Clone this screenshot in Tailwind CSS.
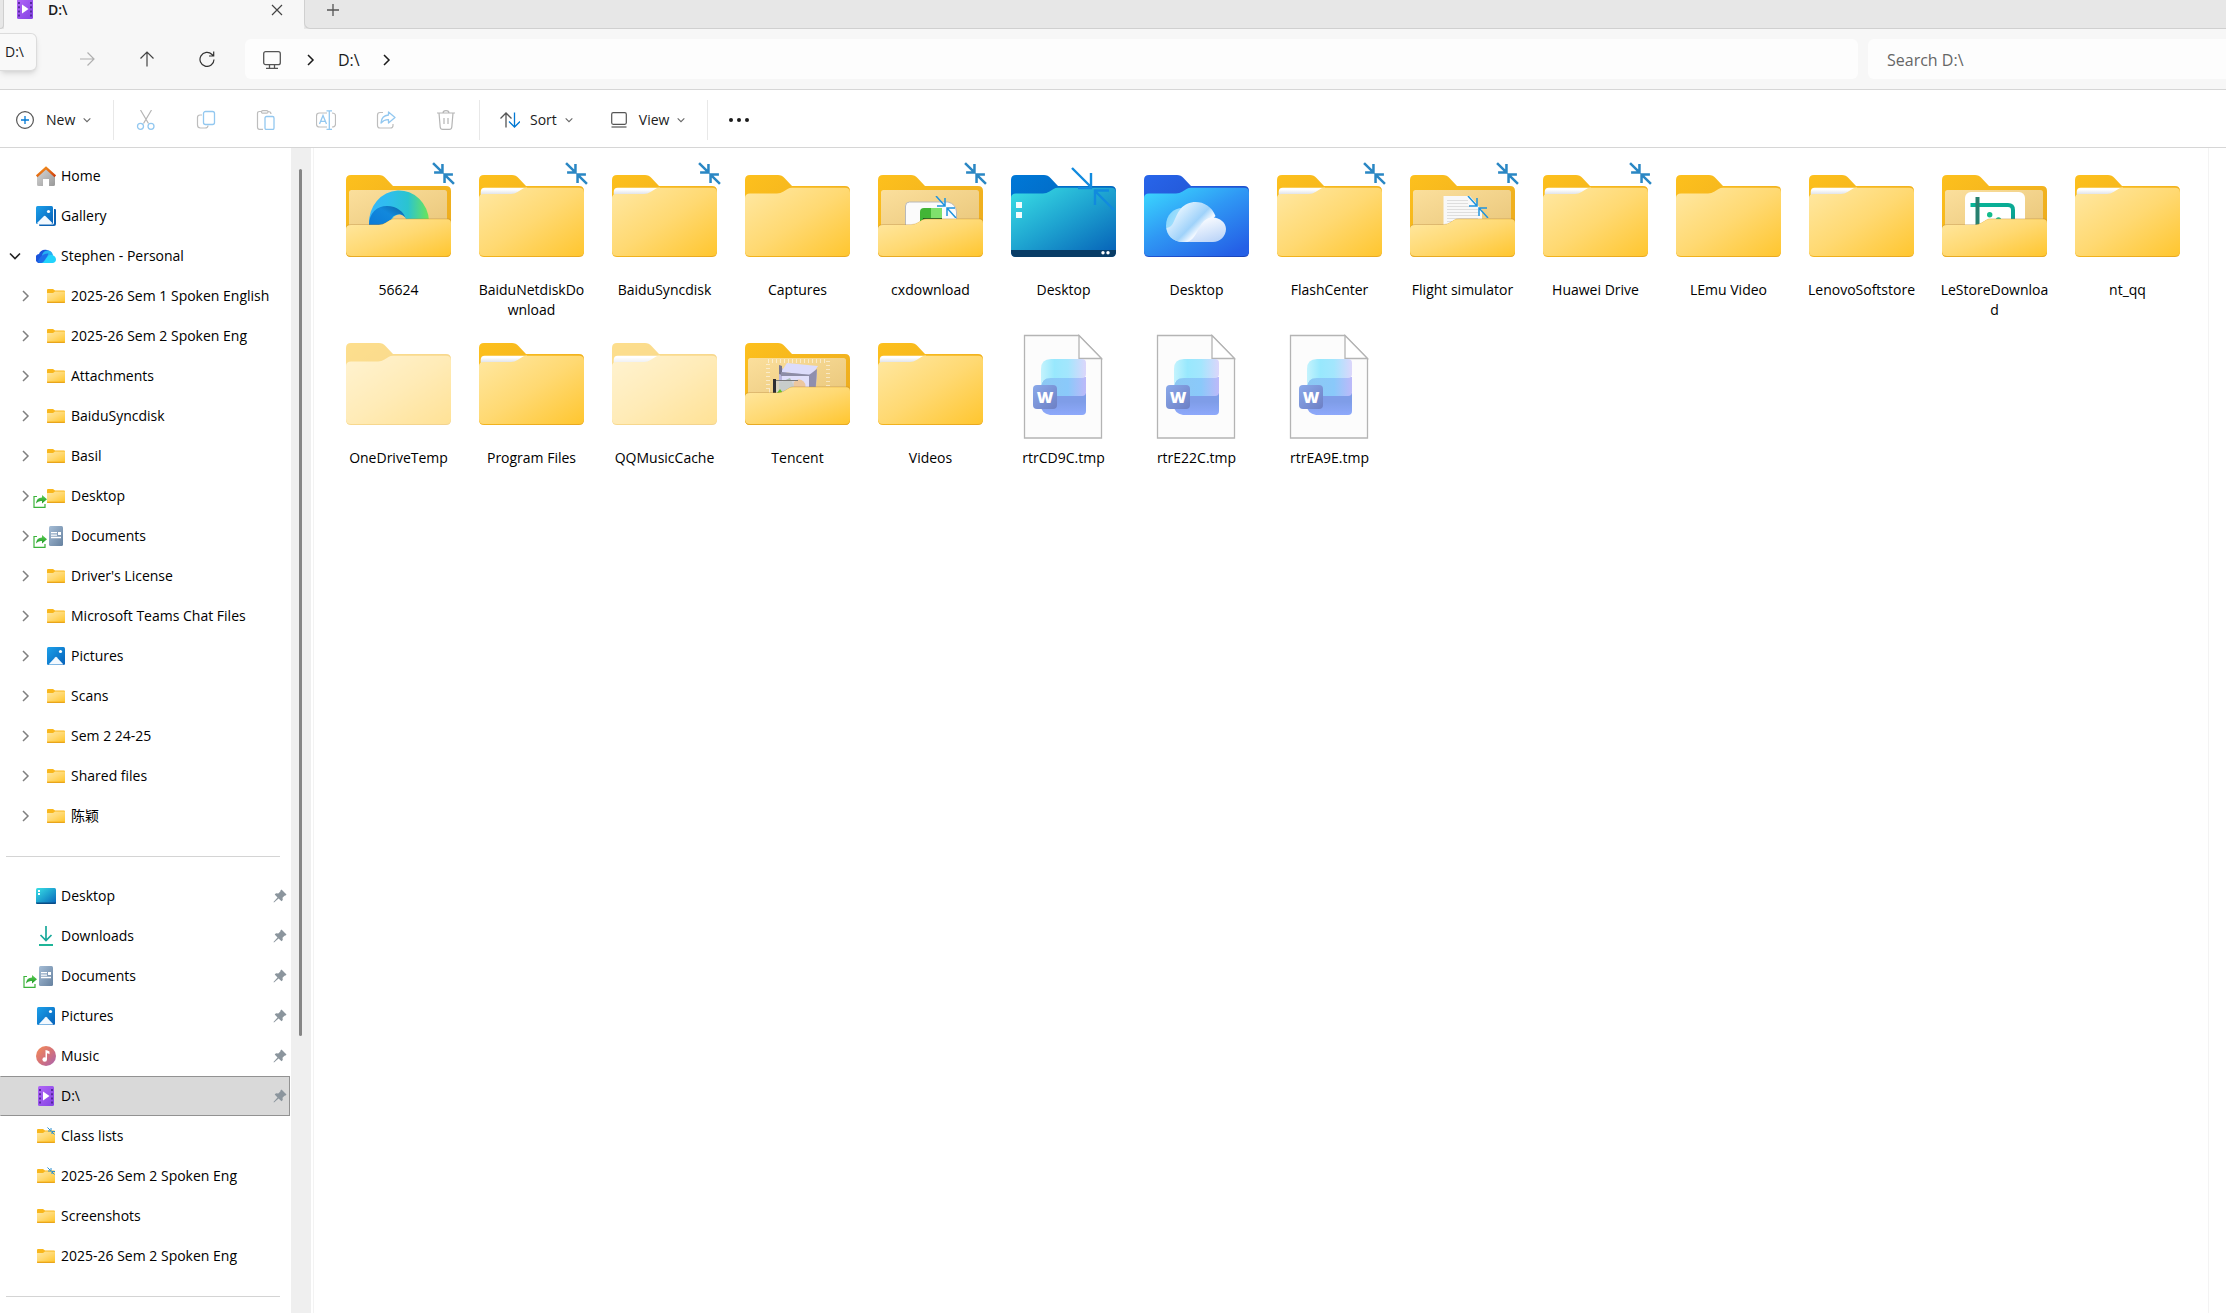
<!DOCTYPE html>
<html lang="en">
<head>
  <meta charset="UTF-8">
  <meta name="viewport" content="width=device-width, initial-scale=1.0">
  <title>D:\</title>
  <script src="https://cdn.jsdelivr.net/npm/@tailwindcss/browser@4"></script>
</head>
<body class="flex h-screen flex-col overflow-hidden bg-white font-['Open_Sans','Noto_Sans_CJK_SC',sans-serif] text-[14px] leading-5 text-black">

  <!-- Shared gradients and icon symbols -->
  <svg class="absolute size-0" aria-hidden="true">
    <defs>
      <linearGradient id="g-back" x1="0" y1="0" x2="1" y2="1"><stop offset="0" stop-color="#fdc01d"/><stop offset="1" stop-color="#e9a820"/></linearGradient>
      <linearGradient id="g-front" x1="0" y1="0" x2="1" y2="1"><stop offset="0" stop-color="#ffe8a3"/><stop offset=".5" stop-color="#ffd972"/><stop offset="1" stop-color="#ffc62f"/></linearGradient>
      <linearGradient id="g-inner" x1="0" y1="0" x2="1" y2="1"><stop offset="0" stop-color="#fbdf9c"/><stop offset="1" stop-color="#e9c67a"/></linearGradient>
      <linearGradient id="g-paper" x1="0" y1="0" x2="0" y2="1"><stop offset=".2" stop-color="#ffffff"/><stop offset=".8" stop-color="#dadde3"/></linearGradient>
      <linearGradient id="g-desk" x1="0" y1="0" x2="1" y2="1"><stop offset="0" stop-color="#3ae0e5"/><stop offset=".5" stop-color="#1ea3d0"/><stop offset="1" stop-color="#0662b8"/></linearGradient>
      <linearGradient id="g-deskback" x1="0" y1="0" x2="1" y2="1"><stop offset="0" stop-color="#0078d7"/><stop offset="1" stop-color="#0459ad"/></linearGradient>
      <linearGradient id="g-od" x1="0" y1="0" x2=".8" y2="1"><stop offset="0" stop-color="#3cdcff"/><stop offset=".5" stop-color="#2f97f4"/><stop offset="1" stop-color="#2560e6"/></linearGradient>
      <linearGradient id="g-odback" x1="0" y1="0" x2="1" y2="1"><stop offset="0" stop-color="#2865ea"/><stop offset="1" stop-color="#1a43b8"/></linearGradient>
      <linearGradient id="g-cloud1" x1="0" y1="0" x2="1" y2="1"><stop offset="0" stop-color="#7cd2fb"/><stop offset="1" stop-color="#c7ecff"/></linearGradient>
      <linearGradient id="g-cloud2" x1="0" y1="0" x2="1" y2=".8"><stop offset=".2" stop-color="#e9f6ff"/><stop offset=".6" stop-color="#9fd2fa"/><stop offset=".75" stop-color="#f2f8ff"/></linearGradient>
      <linearGradient id="g-cloud3" x1=".3" y1="0" x2=".8" y2="1"><stop offset="0" stop-color="#ffffff"/><stop offset="1" stop-color="#b9d3f8"/></linearGradient>
      <linearGradient id="g-edge" x1="0" y1="0" x2="1" y2="0"><stop offset="0" stop-color="#35b6f8"/><stop offset=".3" stop-color="#2fbdf0"/><stop offset=".65" stop-color="#2bc4cf"/><stop offset="1" stop-color="#6ce557"/></linearGradient>
      <linearGradient id="g-edge2" x1="0" y1="1" x2="1" y2="0"><stop offset="0" stop-color="#0a78d6"/><stop offset=".6" stop-color="#1288dc"/><stop offset="1" stop-color="#0b5f9e"/></linearGradient>
      <linearGradient id="g-w1" x1="0" y1="0" x2="1" y2="0"><stop offset="0" stop-color="#c4f3fd"/><stop offset=".3" stop-color="#98e8fd"/><stop offset=".6" stop-color="#a3e6fd"/><stop offset="1" stop-color="#dcd6fb"/></linearGradient>
      <linearGradient id="g-w2" x1="0" y1="0" x2="1" y2="0"><stop offset="0" stop-color="#8cc8f3"/><stop offset=".6" stop-color="#8ac9fa"/><stop offset="1" stop-color="#bdb9f9"/></linearGradient>
      <linearGradient id="g-w3" x1="0" y1="0" x2="0" y2="1"><stop offset=".4" stop-color="#7f9de8"/><stop offset="1" stop-color="#8ea9fb"/></linearGradient>
      <linearGradient id="g-w4" x1="0" y1="0" x2="1" y2="1"><stop offset="0" stop-color="#8aa9ea"/><stop offset="1" stop-color="#6d7fc4"/></linearGradient>
      <linearGradient id="g-pic" x1="0" y1="0" x2="1" y2="1"><stop offset="0" stop-color="#1ca0ea"/><stop offset="1" stop-color="#0661b9"/></linearGradient>
      <linearGradient id="g-music" x1="0" y1="0" x2="1" y2="1"><stop offset="0" stop-color="#f58d57"/><stop offset=".5" stop-color="#d57277"/><stop offset="1" stop-color="#a763b3"/></linearGradient>
      <linearGradient id="g-video" x1="0" y1="0" x2="1" y2="1"><stop offset="0" stop-color="#b267f7"/><stop offset="1" stop-color="#8342e3"/></linearGradient>
      <linearGradient id="g-docs" x1="0" y1="0" x2="1" y2="1"><stop offset="0" stop-color="#a5bdd6"/><stop offset="1" stop-color="#66819f"/></linearGradient>
      <linearGradient id="g-roof" x1="0" y1="0" x2="1" y2="1"><stop offset="0" stop-color="#f79a1f"/><stop offset="1" stop-color="#cf3d0c"/></linearGradient>
      <linearGradient id="g-wall" x1="0" y1="0" x2="1" y2="1"><stop offset="0" stop-color="#dadada"/><stop offset="1" stop-color="#989898"/></linearGradient>
      <linearGradient id="g-share" x1="0" y1="0" x2="0" y2="1"><stop offset="0" stop-color="#5ccf57"/><stop offset="1" stop-color="#1f9a24"/></linearGradient>
      <linearGradient id="g-teal" x1="0" y1="0" x2="1" y2="1"><stop offset="0" stop-color="#08b598"/><stop offset=".7" stop-color="#0aa593"/><stop offset="1" stop-color="#176f93"/></linearGradient>
    </defs>

    <!-- Large icons, drawn on a 133x124 tile -->
    <symbol id="shrink" viewBox="0 0 22 22">
      <path d="M1 1l9 9M10 2v8H2M21 21l-9-9M12 20v-8h8" fill="none" stroke="#2a87c4" stroke-width="2.400"/>
    </symbol>
    <symbol id="shrink-thin" viewBox="0 0 22 22">
      <path d="M1 0l9 10M10 2v8H2M21 22l-9-10M12 20v-8h8" fill="none" stroke="#1f93dd" stroke-width="1.500"/>
    </symbol>
    <symbol id="folder" viewBox="0 0 133 124">
      <path d="M14 98V25q0-5 5-5h28q4 0 6.500 3l7.500 8h53q5 0 5 5v61q0 5-5 5H19q-5 0-5-5z" fill="url(#g-back)"/>
      <path d="M14 43q0-4.500 5-4.500h27q3.500 0 6.500-2l4-2.500q2-1.300 4.500-1.300h53q5 0 5 5V96q0 5-5 5H19q-5 0-5-5z" fill="url(#g-front)"/>
    </symbol>
    <symbol id="folder-full" viewBox="0 0 133 124">
      <path d="M14 98V25q0-5 5-5h28q4 0 6.500 3l7.500 8h53q5 0 5 5v61q0 5-5 5H19q-5 0-5-5z" fill="url(#g-back)"/>
      <path d="M15.700 42v-5q0-4.300 4-4.300H62v8z" fill="url(#g-paper)"/>
      <path d="M14 43q0-4 5-4h27q3.500 0 6.500-2l4-2.500q2-1.800 4.500-1.800h53q5 0 5 5V96q0 5-5 5H19q-5 0-5-5z" fill="url(#g-front)"/>
    </symbol>
    <symbol id="open-back" viewBox="0 0 133 124">
      <path d="M14 98V25q0-5 5-5h28q4 0 6.500 3l7.500 8h53q5 0 5 5v61q0 5-5 5H19q-5 0-5-5z" fill="url(#g-back)"/>
      <path d="M17 75V37.500q0-2.500 2.500-2.500h93q2.500 0 2.500 2.500V75z" fill="url(#g-inner)"/>
    </symbol>
    <symbol id="open-front" viewBox="0 0 133 124">
      <path d="M14 73q0-4 5-4h29q3.500 0 6.500-2l4-2.500q2-1.300 4.500-1.300h53q3 0 3 3V96H14z" fill="#b98a3c" opacity=".35"/>
      <path d="M14 74q0-4 5-4h28q3.500 0 6.500-2l4-2.500q2-1.300 4.500-1.300h53q4 0 4 4V97q0 5-5 5H19q-5 0-5-5z" fill="#e8ab25"/>
      <path d="M14 74q0-4 5-4h28q3.500 0 6.500-2l4-2.500q2-1.300 4.500-1.300h53q4 0 4 4V96q0 5-5 5H19q-5 0-5-5z" fill="url(#g-front)"/>
    </symbol>
    <symbol id="in-edge" viewBox="0 0 133 124">
      <path d="M37 69a30 32 0 0 1 60-3q0 6-5 9H37z" fill="url(#g-edge)"/>
      <path d="M37 70c0-12 8-19 18-19s17 6 19 13q-3-5-8-4.500-5 .5-7 5-2 6-8 10H37z" fill="url(#g-edge2)"/>
      <path d="M59 66q3-7 9-6.500 4 .5 6 4.500v6H58z" fill="#efcd8a"/>
    </symbol>
    <symbol id="in-game" viewBox="0 0 133 124">
      <path d="M41.500 76V51q0-4 4-4H84q8 2 8.500 10v19z" fill="#fbfbfb" stroke="#b9b9b9"/>
      <path d="M56 76V57q0-4 4-4h18v23z" fill="#42b536"/>
      <path d="M67 53h11v10H67z" fill="#7fe06c"/>
      <path d="M59 63h19v8H58z" fill="#0f5f21"/>
    </symbol>
    <symbol id="in-page" viewBox="0 0 133 124">
      <path d="M47.500 76V41H74l12 14v21z" fill="#f8f8f8"/>
      <path d="M51 45.500h21M51 48.500h21M51 51.500h23M51 54.500h31M51 57.500h31M51 60.500h31M51 63.500h31M51 66.500h20" stroke="#dedede"/>
    </symbol>
    <symbol id="in-crop" viewBox="0 0 133 124">
      <rect x="37" y="37" width="60" height="50" rx="6" fill="#fff"/>
      <path d="M42.500 50H80q5 0 5 5v20" fill="none" stroke="url(#g-teal)" stroke-width="4"/>
      <path d="M49.500 42v34" stroke="#27806f" stroke-width="4"/>
      <circle cx="61.700" cy="59.700" r="2.700" fill="#12bb8c"/><circle cx="70.500" cy="65" r="2.700" fill="#12bb8c"/>
    </symbol>
    <symbol id="in-box" viewBox="0 0 133 124">
      <rect x="37" y="38" width="60" height="30" fill="none" stroke="#fff" stroke-opacity=".5" stroke-width="4" stroke-dasharray="1 3"/>
      <path d="M48 42l8 8h30l-2 26H48z" fill="#b9b6de"/>
      <path d="M56 40l31 3-6 9-31-3z" fill="#dcdcfb"/>
      <path d="M48 42l3 1v9l-3-1z" fill="#77778f"/>
      <path d="M50 49l31 3v3l-31-2z" fill="#8d8da6"/>
      <path d="M51 53h27v20H51z" fill="#e0dffb"/>
      <path d="M78 52l8-6-2 28h-6z" fill="#8f8fae"/>
      <circle cx="68" cy="63" r="6.500" fill="#ecc79e"/>
      <path d="M48 60l11-5 4 8-6 9h-9z" fill="#a9bdb3"/>
      <path d="M42 56h3v14h-3z" fill="#2d2d33"/>
      <path d="M45 58h18v12H45z" fill="#d2d2d2" opacity=".75"/><path d="M45 57.500h22" stroke="#777"/>
      <path d="M46 70l3-4 3 4z" fill="#62c423"/>
    </symbol>
    <symbol id="desk-folder" viewBox="0 0 133 124">
      <path d="M14 98V25q0-5 5-5h28q4 0 6.500 3l7.500 8h53q5 0 5 5v61q0 5-5 5H19q-5 0-5-5z" fill="url(#g-deskback)"/>
      <path d="M14 43q0-4.500 5-4.500h27q3.500 0 6.500-2l4-2.500q2-1.300 4.500-1.300h53q5 0 5 5V97H14z" fill="url(#g-desk)"/>
      <path d="M14 95h105v2q0 5-5 5H19q-5 0-5-5z" fill="#093c66"/>
      <path d="M19 47h6v6h-6zM19 57h6v6h-6z" fill="#f4fdfd"/>
      <circle cx="106" cy="97.700" r="1.700" fill="#fff"/><circle cx="111" cy="97.700" r="1.700" fill="#fff"/>
      <path d="M75 13l19 19M94 18v15H81M117 55L98 36M98 50V35.500h14" fill="none" stroke="#118ade" stroke-width="2.400"/>
    </symbol>
    <symbol id="od-folder" viewBox="0 0 133 124">
      <path d="M14 98V25q0-5 5-5h28q4 0 6.500 3l7.500 8h53q5 0 5 5v61q0 5-5 5H19q-5 0-5-5z" fill="url(#g-odback)"/>
      <path d="M14 43q0-4.500 5-4.500h27q3.500 0 6.500-2l4-2.500q2-1.300 4.500-1.300h53q5 0 5 5V96q0 5-5 5H19q-5 0-5-5z" fill="url(#g-od)"/>
      <path d="M36 71c0-11 7-18 17-18v34C43 87 36 80 36 71z" fill="url(#g-cloud1)"/>
      <path d="M36.500 73c8-1 7-10 14-19 9-11 29-9 35 7L62 87h-9c-9 0-15.500-6-16.500-14z" fill="url(#g-cloud2)"/>
      <path d="M57 87c9-2 10-14 17-21 9-8 22-1 22 8 0 7-6 13-13 13z" fill="url(#g-cloud3)"/>
    </symbol>
    <symbol id="word-doc" viewBox="0 0 133 124">
      <path d="M27.500 12.500h54.500l22.500 23v79.500h-77z" fill="#fcfcfc" stroke="#b4b4b4" stroke-width="1.300"/>
      <path d="M82 12.500v23h22.500z" fill="#fff" stroke="#b4b4b4" stroke-width="1.300"/>
      <path d="M44 70h45v18q0 4-4 4H53q-9-2-9-9z" fill="url(#g-w3)"/>
      <path d="M44 65q0-10 9-11h36v15q0 4-4 4H44z" fill="url(#g-w2)"/>
      <path d="M44 46q0-10 10-10h31q4 0 4 4v11q0 4-4 4H54q-10 0-10 9z" fill="url(#g-w1)"/>
      <rect x="36" y="62" width="24" height="24" rx="4" fill="url(#g-w4)"/>
      <text x="48" y="80" text-anchor="middle" font-family="Open Sans, sans-serif" font-weight="800" font-size="16" fill="#fff">W</text>
    </symbol>

    <!-- Small navigation icons -->
    <symbol id="s-folder" viewBox="0 0 20 20">
      <path d="M1 4q0-1 1-1h5l2 1.500h9q1 0 1 1V16q0 1-1 1H2q-1 0-1-1z" fill="#f9b71c"/>
      <path d="M1 7h6l2-1.500h10V15.500H1z" fill="url(#g-front)"/>
      <path d="M1 16h18q0 1-1 1H2q-1 0-1-1z" fill="#e8a41c"/>
    </symbol>
    <symbol id="s-folder-shrink" viewBox="0 0 20 20">
      <use href="#s-folder" width="20" height="20"/>
      <path d="M11.500 1.500l3 3M15 2v3h-3M18.500 8.500l-3-3M16 8V5.500h3" fill="none" stroke="#2a8fd0"/>
    </symbol>
    <symbol id="s-home" viewBox="0 0 20 20">
      <path d="M1 10l9-8 9 8v8.500q0 1.500-1.500 1.500H13v-7H7v7H2.500Q1 20 1 18.500z" fill="url(#g-wall)"/>
      <path d="M.700 10.300L10 1.800l9.300 8.500" fill="none" stroke="url(#g-roof)" stroke-width="2.400"/>
    </symbol>
    <symbol id="s-gallery" viewBox="0 0 20 20">
      <path d="M3 3h16q1 0 1 1v14q0 2-2 2H4q-1 0-1-1z" fill="#0b62b4"/>
      <rect width="18" height="18.500" rx="1.500" fill="#fff"/>
      <rect width="17" height="18" rx="1.500" fill="url(#g-pic)"/>
      <path d="M1 17l7-7q.700-.700 1.400 0l7 7q-.700 1-1.400 1H2z" fill="#f2f9ff"/>
      <circle cx="12.500" cy="5.500" r="1.600" fill="#fff"/>
    </symbol>
    <symbol id="s-cloud" viewBox="0 0 20 20">
      <path d="M4.500 17A4.500 4.500 0 0 1 3 8c1-3 4-5 8-4 3 .5 5 2.500 5.500 5L9 17z" fill="#1b55dc"/>
      <path d="M6 9c2-6 10-6 11 .5L9 17H5z" fill="#25b1f3"/>
      <path d="M5.500 17c3 0 3.500-4 6-6.500 3-3 8.500-1 8.500 3 0 2-1.500 3.500-3.500 3.500z" fill="#22d3fc"/>
      <path d="M5 17c3-.500 4-4 6-6l1.500-3.500C8 7 4 10 1.500 16q1.500 1 3.500 1z" fill="#1d6fea"/>
    </symbol>
    <symbol id="s-pictures" viewBox="0 0 20 20">
      <rect x="1" y="1" width="18" height="18" rx="1.500" fill="url(#g-pic)"/>
      <path d="M2.500 18.500l6.800-7.300q.700-.700 1.400 0l6.800 7.300z" fill="#f2f9ff"/>
      <circle cx="14.500" cy="5.500" r="1.600" fill="#fff"/>
    </symbol>
    <symbol id="s-docs" viewBox="0 0 20 20">
      <rect x="3" width="14" height="20" rx="1.500" fill="url(#g-docs)"/>
      <path d="M5 6.700h6M5 9.200h6M5 11.500h10" stroke="#fff" stroke-width="1.300"/><path d="M12 6h3v3h-3z" fill="#fff"/>
    </symbol>
    <symbol id="s-desktop" viewBox="0 0 20 20">
      <rect y="2" width="20" height="16" rx="1.500" fill="url(#g-desk)"/>
      <path d="M0 16.500h20q0 1.500-1.500 1.500h-17Q0 18 0 16.500z" fill="#0a4c85"/>
      <path d="M2 4h2v2H2zM2 7h2v2H2z" fill="#fff"/>
    </symbol>
    <symbol id="s-downloads" viewBox="0 0 20 20">
      <path d="M10 0v14M4.500 9l5.500 5.500L15.500 9" fill="none" stroke="#1aa99b" stroke-width="1.700"/>
      <path d="M3 18h14v2H3z" fill="#1eb598"/>
    </symbol>
    <symbol id="s-music" viewBox="0 0 20 20">
      <circle cx="10" cy="10" r="10" fill="url(#g-music)"/>
      <circle cx="8.700" cy="13.500" r="2.300" fill="#fff"/><path d="M9.500 4q2 .200 4 1.500v2.700Q12 7.200 11 7.200v6.300H9.500z" fill="#fff"/>
    </symbol>
    <symbol id="s-video" viewBox="0 0 20 20">
      <rect x="2" width="16" height="20" rx="1.500" fill="url(#g-video)"/>
      <path d="M4 3v15M16 3v15" stroke="#4b2391" stroke-width="1.700" stroke-dasharray="2 2.200"/>
      <path d="M7 5.500l6.500 4.500L7 14.500z" fill="#fff"/>
    </symbol>
    <symbol id="s-share" viewBox="0 0 14 14">
      <path d="M4 2.500H1v10.800h11V10" fill="none" stroke="#3bb33a" stroke-width="1.200"/>
      <path d="M3 9.500q.500-6 6-6V1l5 4.300-5 4.200V7q-4-.500-6 2.500z" fill="url(#g-share)"/>
    </symbol>
    <symbol id="s-pin" viewBox="0 0 14 14">
      <path d="M8.500.500l5 5-1 1-1 .200-2 2 .300 2.300-1.300 1.300L5.600 9.500 1 13.500l-.500-.500L4.500 8.400 1.700 5.500 3 4.200l2.300.300 2-2 .200-1z" fill="#8b959d"/>
    </symbol>
    <symbol id="chev-r" viewBox="0 0 10 12"><path d="M2 1l5 5-5 5" fill="none" stroke="currentColor" stroke-width="1.500"/></symbol>
    <symbol id="chev-d" viewBox="0 0 12 10"><path d="M1 2.500l5 5 5-5" fill="none" stroke="currentColor" stroke-width="1.600"/></symbol>
  </svg>

  <!-- Tab strip -->
  <header class="flex h-[29px] shrink-0 bg-[#e7e7e7] text-[#1b1b1b]">
    <div class="w-1 rounded-br-md border-r border-b border-[#cfcfcf]"></div>
    <div class="flex h-[29px] w-[300px] items-start bg-[#f7f7f7] pl-[11px]">
      <svg class="-mt-px size-5"><use href="#s-video"/></svg>
      <span class="ml-[13px] font-semibold">D:\</span>
      <button class="ml-auto flex h-[19px] w-[54px] items-center justify-center" aria-label="Close tab">
        <svg class="size-3" viewBox="0 0 12 12"><path d="M1 1l10 10M11 1L1 11" stroke="#444" stroke-width="1.200"/></svg>
      </button>
    </div>
    <div class="flex flex-1 items-start rounded-bl-md border-b border-l border-[#d0d0d0] pl-[22px]">
      <button class="h-5" aria-label="New tab"><svg class="size-3" viewBox="0 0 12 12"><path d="M6 0v12M0 6h12" stroke="#555" stroke-width="1.300"/></svg></button>
    </div>
  </header>

  <!-- Navigation bar -->
  <nav class="relative flex h-[61px] shrink-0 items-center border-b border-[#d6d6d6] bg-[#f7f7f7] pl-[57px] text-[#1b1b1b]">
    <button class="flex w-[60px] justify-center" aria-label="Forward"><svg class="size-4" viewBox="0 0 16 16"><path d="M1 8h14M8.500 1.500L15 8l-6.500 6.500" fill="none" stroke="#b0b0b0" stroke-width="1.200"/></svg></button>
    <button class="flex w-[60px] justify-center" aria-label="Up"><svg class="size-4" viewBox="0 0 16 16"><path d="M8 15.500V1M1.500 7.500L8 1l6.500 6.500" fill="none" stroke="#444" stroke-width="1.200"/></svg></button>
    <button class="flex w-[60px] justify-center" aria-label="Refresh"><svg class="size-4" viewBox="0 0 16 16"><path d="M15 8.500A7 7 0 1 1 13 3.500l1.500 1.500M14.700.500V5H10" fill="none" stroke="#333" stroke-width="1.200"/></svg></button>
    <div class="ml-2 flex h-10 flex-1 items-center rounded-md bg-[#fdfdfd] pt-px pl-[18px] text-[16px]">
      <button aria-label="This PC"><svg class="size-[18px]" viewBox="0 0 18 18"><rect x=".7" y=".7" width="16.600" height="13" rx="2" fill="none" stroke="#555" stroke-width="1.300"/><path d="M3 17.300h12M6.500 14v3M11.500 14v3" stroke="#555" stroke-width="1.300"/></svg></button>
      <svg class="ml-[25px] h-3 w-[10px]"><use href="#chev-r"/></svg>
      <button class="ml-[22px]">D:\</button>
      <svg class="ml-[22px] h-3 w-[10px]"><use href="#chev-r"/></svg>
    </div>
    <input type="search" aria-label="Search" placeholder="Search D:\" class="ml-[10px] h-10 w-[358px] rounded-l-md bg-[#fdfdfd] pt-px pl-[19px] text-[16px] placeholder:text-[#666]">
    <div role="tooltip" class="absolute top-1 left-0 z-10 flex h-[38px] items-center rounded-r-md border border-l-0 border-[#dcdcdc] bg-[#f9f9f9] pr-3 pl-[5px] shadow-md">D:\</div>
  </nav>

  <!-- Command bar -->
  <div class="flex h-[58px] shrink-0 items-center border-b border-[#d6d6d6] pt-[2px] text-[#1b1b1b]">
    <button class="flex w-[113px] items-center pl-4">
      <svg class="size-[18px]" viewBox="0 0 18 18"><circle cx="9" cy="9" r="8.400" fill="none" stroke="#555" stroke-width="1.200"/><path d="M9 5v8M5 9h8" stroke="#0078d4" stroke-width="1.300"/></svg>
      <span class="ml-3">New</span>
      <svg class="ml-2 h-2 w-2 text-[#666]"><use href="#chev-d"/></svg>
    </button>
    <div class="mr-[2px] h-10 w-px bg-[#e8e8e8]"></div>
    <button class="flex w-[60px] justify-center" aria-label="Cut" disabled><svg class="size-5" viewBox="0 0 20 20" fill="none"><path d="M4.500 0l8 13.500M15.500 0l-8 13.500" stroke="#b5b5b5" stroke-width="1.200"/><circle cx="4.500" cy="16.300" r="3" stroke="#93c8f0" stroke-width="1.300"/><circle cx="15" cy="16.300" r="3" stroke="#93c8f0" stroke-width="1.300"/></svg></button>
    <button class="flex w-[60px] justify-center" aria-label="Copy" disabled><svg class="size-5" viewBox="0 0 20 20" fill="none"><path d="M6 5H4Q1.500 5 1.500 7.500V15q0 3 3 3H9q3 0 3-2.500" stroke="#bdbdbd" stroke-width="1.200"/><rect x="7.500" y="1.500" width="11" height="13" rx="2" stroke="#93c8f0" stroke-width="1.300"/></svg></button>
    <button class="flex w-[60px] justify-center" aria-label="Paste" disabled><svg class="size-5" viewBox="0 0 20 20" fill="none"><path d="M7 19.300H3.500q-2 0-2-2V3.500q0-2 2-2H6M12 1.500q3 0 3 2.500" stroke="#bdbdbd" stroke-width="1.200"/><rect x="5.500" y=".6" width="6.500" height="2.500" rx="1.200" stroke="#bdbdbd" stroke-width="1.200"/><rect x="9" y="6.500" width="9" height="13" rx="1.500" stroke="#93c8f0" stroke-width="1.300"/></svg></button>
    <button class="flex w-[60px] justify-center" aria-label="Rename" disabled><svg class="size-5" viewBox="0 0 20 20" fill="none"><path d="M11 17H3.500q-3 0-3-3V6q0-3 3-3H11M16 3q3.500 0 3.500 3v8q0 3-3.500 3" stroke="#bdbdbd" stroke-width="1.200"/><path d="M13.300 1v18M10.500.8h5.500M10.500 19.300h5.500M3.500 14L7 5.500l3.500 8.500M4.700 11.300h4.600" stroke="#93c8f0" stroke-width="1.300"/></svg></button>
    <button class="flex w-[60px] justify-center" aria-label="Share" disabled><svg class="size-5" viewBox="0 0 20 20" fill="none"><path d="M7 2.500H4Q1.500 2.500 1.500 5v10.500Q1.500 18 4 18h10.500Q17 18 17 15.500V14" stroke="#bdbdbd" stroke-width="1.200"/><path d="M12.500 2l6.500 5.500-6.500 5.500v-3.300Q8 9.500 5 13q.5-7.500 7.500-8z" stroke="#93c8f0" stroke-width="1.300" stroke-linejoin="round"/></svg></button>
    <button class="flex w-[60px] justify-center" aria-label="Delete" disabled><svg class="size-5" viewBox="0 0 20 20" fill="none" stroke="#b5b5b5" stroke-width="1.200"><path d="M1 3h18M7 3q0-2.400 3-2.400T13 3M3 3l1.200 14q.2 2.400 2.600 2.400h6.400q2.400 0 2.600-2.400L17 3M8 8v6M12 8v6"/></svg></button>
    <div class="ml-[3px] h-10 w-px bg-[#e8e8e8]"></div>
    <button class="ml-5 flex items-center">
      <svg class="h-4 w-5" viewBox="0 0 20 16" fill="none" stroke-width="1.300"><path d="M6 15.500V1M.5 6.500L6 1l5.500 5.500" stroke="#555"/><path d="M14.500.5V15M9 9.500l5.500 5.500L20 9.500" stroke="#0078d4"/></svg>
      <span class="ml-[10px]">Sort</span>
      <svg class="ml-2 h-2 w-2 text-[#666]"><use href="#chev-d"/></svg>
    </button>
    <button class="ml-[38px] flex items-center">
      <svg class="size-4" viewBox="0 0 16 16" fill="none" stroke="#555" stroke-width="1.200"><rect x=".7" y=".7" width="14.600" height="11.600" rx="1.500"/><path d="M.5 15h15"/></svg>
      <span class="ml-3">View</span>
      <svg class="ml-2 h-2 w-2 text-[#666]"><use href="#chev-d"/></svg>
    </button>
    <div class="ml-[22px] h-10 w-px bg-[#e8e8e8]"></div>
    <button class="ml-[21px] flex" aria-label="See more"><svg class="h-1 w-5" viewBox="0 0 20 4" fill="#1b1b1b"><circle cx="2" cy="2" r="2"/><circle cx="10" cy="2" r="2"/><circle cx="18" cy="2" r="2"/></svg></button>
  </div>

  <div class="flex min-h-0 flex-1">
    <!-- Sidebar -->
    <aside class="flex w-[311px] shrink-0 overflow-hidden">
      <ul id="tree" class="w-[291px] pt-2"></ul>
      <div class="flex-1 bg-[#efefef] pt-[21px] pl-2"><div class="h-[867px] w-[3px] rounded-full bg-[#858585]"></div></div>
    </aside>

    <!-- Folder contents -->
    <main class="ml-[2px] mr-[17px] min-w-0 flex-1 border-x border-[#f3f3f3] pt-[7px] pl-[18px]">
      <ul id="files" class="grid grid-cols-[repeat(auto-fill,133px)]"></ul>
    </main>
  </div>

  <script>
    // level 1 = inside OneDrive, null = separator
    const tree = [
      { name: 'Home', icon: 's-home' },
      { name: 'Gallery', icon: 's-gallery' },
      { name: 'Stephen - Personal', icon: 's-cloud', open: true },
      { name: '2025-26 Sem 1 Spoken English', icon: 's-folder', level: 1 },
      { name: '2025-26 Sem 2 Spoken Eng', icon: 's-folder', level: 1 },
      { name: 'Attachments', icon: 's-folder', level: 1 },
      { name: 'BaiduSyncdisk', icon: 's-folder', level: 1 },
      { name: 'Basil', icon: 's-folder', level: 1 },
      { name: 'Desktop', icon: 's-folder', level: 1, shared: true },
      { name: 'Documents', icon: 's-docs', level: 1, shared: true },
      { name: "Driver's License", icon: 's-folder', level: 1 },
      { name: 'Microsoft Teams Chat Files', icon: 's-folder', level: 1 },
      { name: 'Pictures', icon: 's-pictures', level: 1 },
      { name: 'Scans', icon: 's-folder', level: 1 },
      { name: 'Sem 2 24-25', icon: 's-folder', level: 1 },
      { name: 'Shared files', icon: 's-folder', level: 1 },
      { name: '陈颖', icon: 's-folder', level: 1 },
      null,
      { name: 'Desktop', icon: 's-desktop', pinned: true },
      { name: 'Downloads', icon: 's-downloads', pinned: true },
      { name: 'Documents', icon: 's-docs', pinned: true, shared: true },
      { name: 'Pictures', icon: 's-pictures', pinned: true },
      { name: 'Music', icon: 's-music', pinned: true },
      { name: 'D:\\', icon: 's-video', pinned: true, selected: true },
      { name: 'Class lists', icon: 's-folder-shrink' },
      { name: '2025-26 Sem 2 Spoken Eng', icon: 's-folder-shrink' },
      { name: 'Screenshots', icon: 's-folder' },
      { name: '2025-26 Sem 2 Spoken Eng', icon: 's-folder' },
      null,
    ];

    // icons are stacked in order; inner = small shrink badge on the preview
    const files = [
      { name: '56624', icons: ['open-back', 'in-edge', 'open-front'], badge: true },
      { name: 'BaiduNetdiskDo<br>wnload', icons: ['folder-full'], badge: true },
      { name: 'BaiduSyncdisk', icons: ['folder-full'], badge: true },
      { name: 'Captures', icons: ['folder'] },
      { name: 'cxdownload', icons: ['open-back', 'in-game', 'open-front'], badge: true, inner: true },
      { name: 'Desktop', icons: ['desk-folder'] },
      { name: 'Desktop', icons: ['od-folder'] },
      { name: 'FlashCenter', icons: ['folder-full'], badge: true },
      { name: 'Flight simulator', icons: ['open-back', 'in-page', 'open-front'], badge: true, inner: true },
      { name: 'Huawei Drive', icons: ['folder-full'], badge: true },
      { name: 'LEmu Video', icons: ['folder'] },
      { name: 'LenovoSoftstore', icons: ['folder-full'] },
      { name: 'LeStoreDownloa<br>d', icons: ['open-back', 'in-crop', 'open-front'] },
      { name: 'nt_qq', icons: ['folder-full'] },
      { name: 'OneDriveTemp', icons: ['folder'], faded: true },
      { name: 'Program Files', icons: ['folder-full'] },
      { name: 'QQMusicCache', icons: ['folder-full'], faded: true },
      { name: 'Tencent', icons: ['open-back', 'in-box', 'open-front'] },
      { name: 'Videos', icons: ['folder-full'] },
      { name: 'rtrCD9C.tmp', icons: ['word-doc'] },
      { name: 'rtrE22C.tmp', icons: ['word-doc'] },
      { name: 'rtrEA9E.tmp', icons: ['word-doc'] },
    ];

    function treeRow(row) {
      if (!row) {
        return '<li class="flex h-10 items-center pr-[11px] pl-[6px]"><hr class="w-full border-[#d4d4d4]"></li>';
      }
      let chevron = '';
      if (row.open) chevron = '<svg class="h-[10px] w-3 text-[#222]"><use href="#chev-d"/></svg>';
      if (row.level) chevron = '<svg class="h-3 w-[10px] text-[#808080]"><use href="#chev-r"/></svg>';
      const share = row.shared ? '<svg class="absolute top-2 -left-[13px] size-[14px]"><use href="#s-share"/></svg>' : '';
      const pin = row.pinned ? '<svg class="ml-auto size-[14px]"><use href="#s-pin"/></svg>' : '';
      return `<li class="h-10 pr-px">
        <a href="#" class="flex h-full items-center border pr-[2px] ${row.selected ? 'border-[#929292] border-l-transparent bg-[#d9d9d9]' : 'border-transparent'}">
          <span class="flex shrink-0 ${row.level ? 'w-[45px] pl-5' : 'w-[35px] pl-2'}">${chevron}</span>
          <span class="relative shrink-0"><svg class="size-5"><use href="#${row.icon}"/></svg>${share}</span>
          <span class="ml-[5px] whitespace-nowrap">${row.name}</span>${pin}
        </a>
      </li>`;
    }

    function fileTile(file) {
      const layers = file.icons.map((id) => `<use href="#${id}" width="133" height="124"/>`).join('');
      const inner = file.inner ? '<use href="#shrink-thin" x="71" y="41" width="22" height="22"/>' : '';
      const badge = file.badge ? '<use href="#shrink" x="100" y="7" width="23" height="23"/>' : '';
      return `<li class="h-[168px]">
        <a href="#" class="block text-center">
          <svg viewBox="0 0 133 124" class="mb-px w-full ${file.faded ? 'opacity-50' : ''}">${layers}${inner}${badge}</svg>
          <span class="block whitespace-nowrap">${file.name}</span>
        </a>
      </li>`;
    }

    document.getElementById('tree').innerHTML = tree.map(treeRow).join('');
    document.getElementById('files').innerHTML = files.map(fileTile).join('');
  </script>
</body>
</html>
